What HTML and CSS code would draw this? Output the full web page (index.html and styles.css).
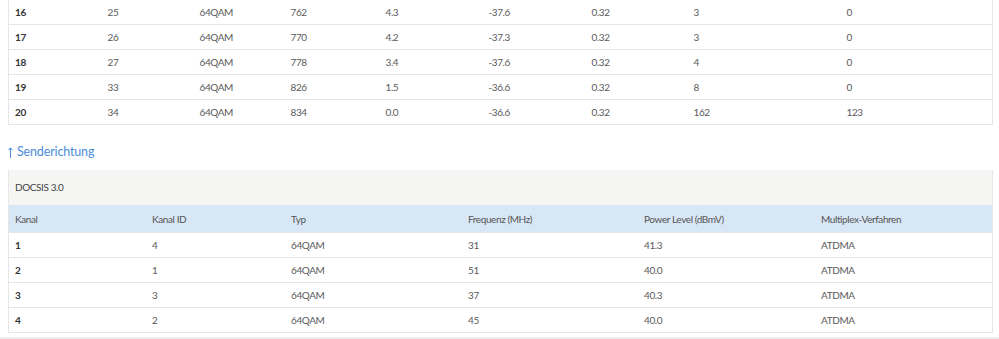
FILE: index.html
```html
<!DOCTYPE html>
<html lang="de">
<head>
<meta charset="utf-8">
<title>Kabel</title>
<link rel="stylesheet" href="styles.css">
</head>
<body>
<div class="page">
  <table class="tbl down">
    <colgroup>
      <col class="d1"><col class="d2"><col class="d3"><col class="d4"><col class="d5"><col class="d6"><col class="d7"><col class="d8"><col class="d9">
    </colgroup>
    <tbody>
      <tr><td class="b">16</td><td>25</td><td>64QAM</td><td>762</td><td>4.3</td><td>-37.6</td><td>0.32</td><td>3</td><td>0</td></tr>
      <tr><td class="b">17</td><td>26</td><td>64QAM</td><td>770</td><td>4.2</td><td>-37.3</td><td>0.32</td><td>3</td><td>0</td></tr>
      <tr><td class="b">18</td><td>27</td><td>64QAM</td><td>778</td><td>3.4</td><td>-37.6</td><td>0.32</td><td>4</td><td>0</td></tr>
      <tr><td class="b">19</td><td>33</td><td>64QAM</td><td>826</td><td>1.5</td><td>-36.6</td><td>0.32</td><td>8</td><td>0</td></tr>
      <tr><td class="b">20</td><td>34</td><td>64QAM</td><td>834</td><td>0.0</td><td>-36.6</td><td>0.32</td><td>162</td><td>123</td></tr>
    </tbody>
  </table>

  <h3 class="section-title"><svg class="arrow" width="5" height="11" viewBox="0 0 5 11" aria-hidden="true"><path d="M2.5 1 V11 M0.5 3.2 L2.5 0.8 L4.5 3.2" fill="none" stroke="currentColor" stroke-width="1"/></svg>Senderichtung</h3>

  <div class="panel">
    <div class="panel-heading">DOCSIS 3.0</div>
    <table class="tbl up">
      <colgroup>
        <col class="u1"><col class="u2"><col class="u3"><col class="u4"><col class="u5"><col class="u6">
      </colgroup>
      <thead>
        <tr><th>Kanal</th><th>Kanal ID</th><th>Typ</th><th>Frequenz (MHz)</th><th>Power Level (dBmV)</th><th>Multiplex-Verfahren</th></tr>
      </thead>
      <tbody>
        <tr><td class="b">1</td><td>4</td><td>64QAM</td><td>31</td><td>41.3</td><td>ATDMA</td></tr>
        <tr><td class="b">2</td><td>1</td><td>64QAM</td><td>51</td><td>40.0</td><td>ATDMA</td></tr>
        <tr><td class="b">3</td><td>3</td><td>64QAM</td><td>37</td><td>40.3</td><td>ATDMA</td></tr>
        <tr><td class="b">4</td><td>2</td><td>64QAM</td><td>45</td><td>40.0</td><td>ATDMA</td></tr>
      </tbody>
    </table>
  </div>
</div>
<div class="footer-bar"></div>
</body>
</html>
```

FILE: styles.css
```css
html, body {
  margin: 0;
  padding: 0;
  background: #fff;
  overflow: hidden;
}
body {
  font-family: "Source Sans Pro", Lato, "Liberation Sans", sans-serif;
  font-size: 10px;
  letter-spacing: -0.4px;
  color: #555;
}
.page {
  margin-left: 8px;
  width: 985px;
}
.tbl {
  width: 100%;
  border-collapse: collapse;
  table-layout: fixed;
}
.tbl td, .tbl th {
  padding: 0 6px;
  text-align: left;
  font-weight: normal;
  white-space: nowrap;
  color: #5a5a5a;
}
.tbl td.b {
  font-weight: bold;
  color: #333;
}
.down {
  margin-top: -1px;
  border: 1px solid #e6e6e6;
}
.down td {
  height: 24px;
  border-top: 1px solid #e6e6e6;
}
.d1 { width: 93px; }
.d2 { width: 92px; }
.d3 { width: 91px; }
.d4 { width: 95px; }
.d5 { width: 103px; }
.d6 { width: 103px; }
.d7 { width: 102px; }
.d8 { width: 153px; }
.d9 { width: auto; }

.section-title {
  margin: 17px 0 8px;
  height: 20px;
  font-size: 12.5px;
  letter-spacing: -0.15px;
  font-weight: normal;
  color: #4a8cd8;
  line-height: 20px;
  display: flex;
  align-items: center;
  gap: 4px;
}
.arrow {
  display: block;
  flex: none;
  margin-top: 1px;
}
.panel {
  border: 1px solid #e6e6e6;
  border-top: 0;
}
.panel-heading {
  background: #f5f5f4;
  height: 35px;
  line-height: 34px;
  padding: 0 6px;
  color: #444;
}
.up th {
  background: #d8e7f5;
  height: 27px;
  color: #555;
}
.up td {
  height: 24px;
  border-top: 1px solid #e6e6e6;
}
.u1 { width: 137px; }
.u2 { width: 139px; }
.u3 { width: 177px; }
.u4 { width: 176px; }
.u5 { width: 177px; }
.u6 { width: auto; }

.footer-bar {
  margin-top: 4px;
  height: 3px;
  background: #ececec;
}
```
